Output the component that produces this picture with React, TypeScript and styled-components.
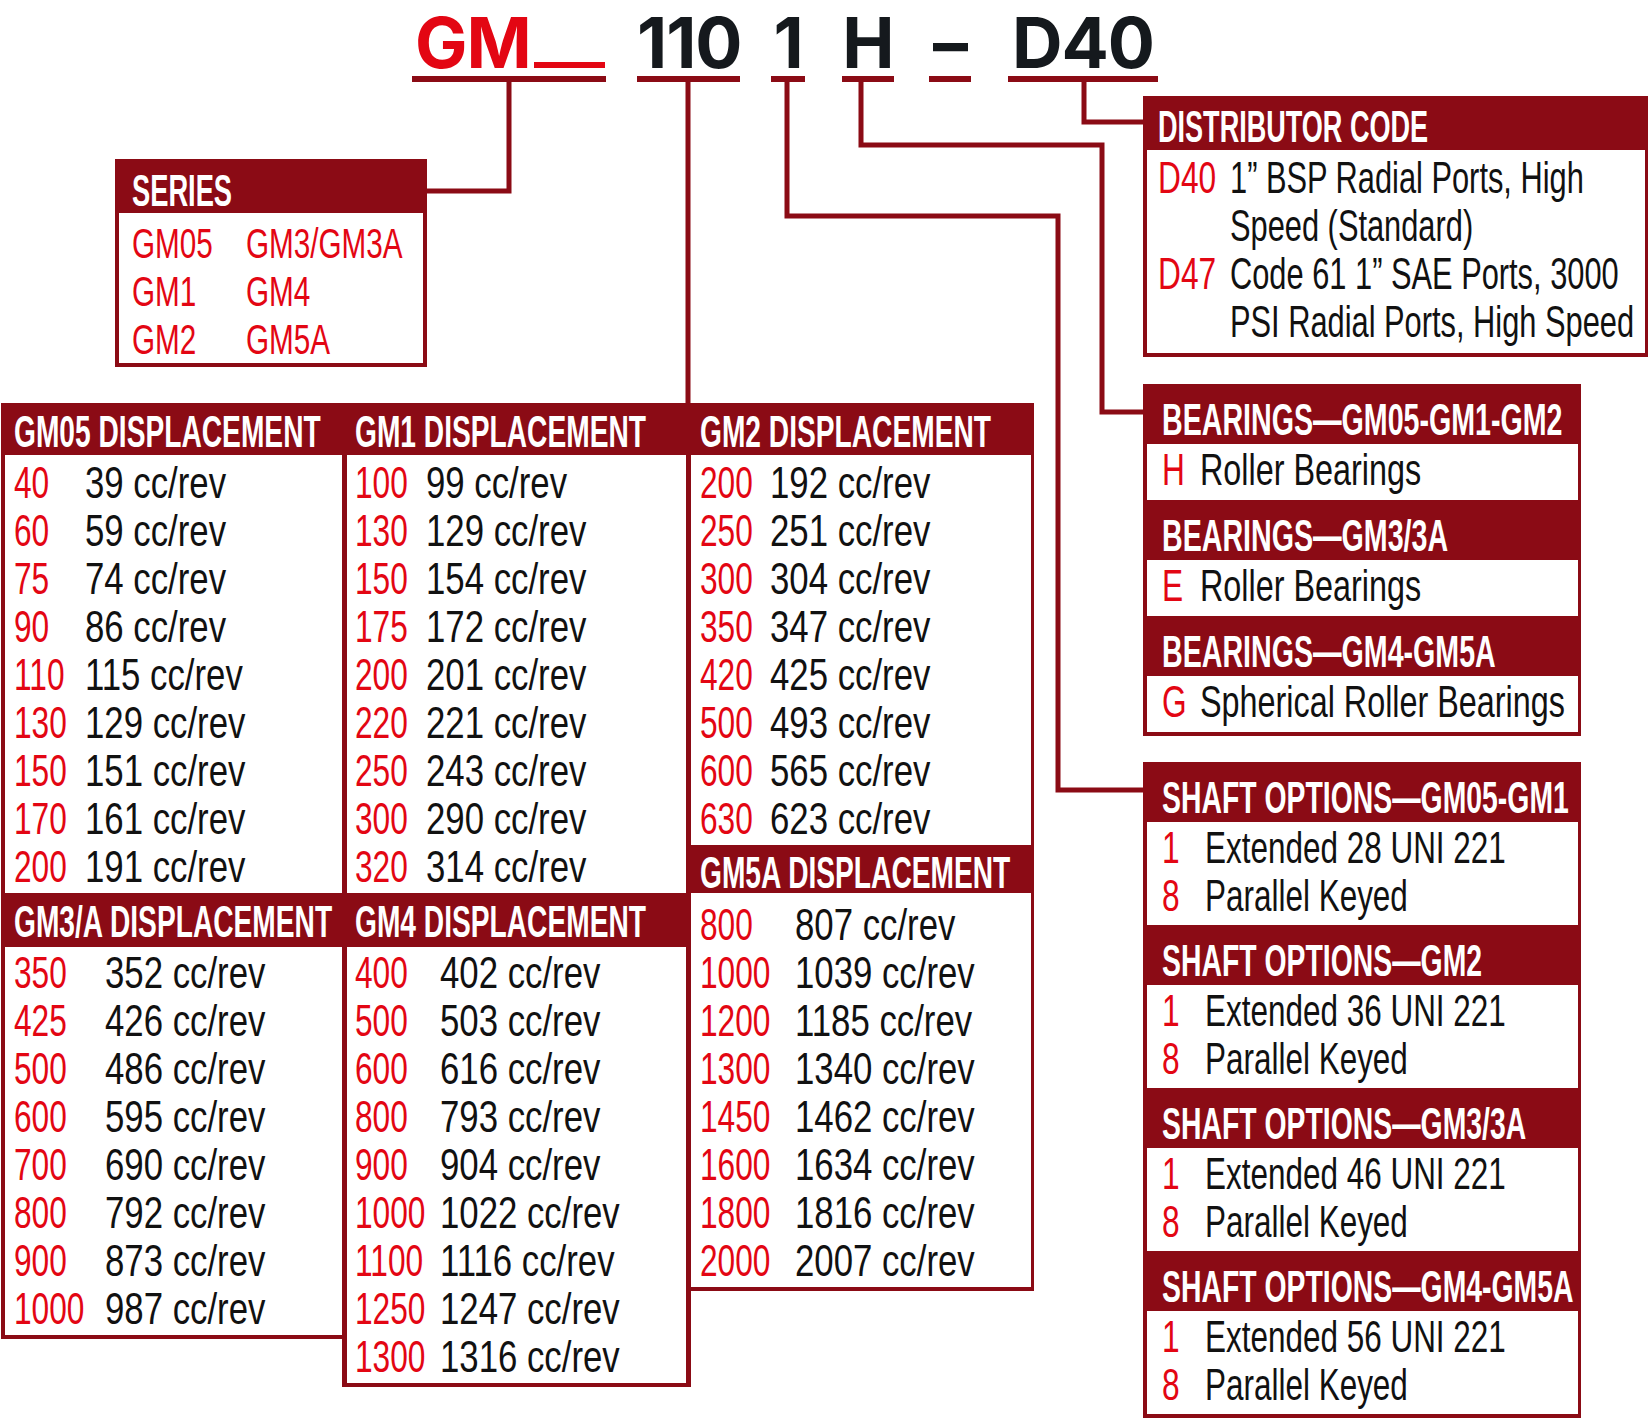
import React from 'react';
import styled, { createGlobalStyle } from 'styled-components';

const DARK = '#8b0b15';
const RED = '#e30613';
const INK = '#111111';
const COND = `"Liberation Sans Narrow", "Liberation Sans", Arial, sans-serif`;

const Global = createGlobalStyle`
  html, body { margin: 0; padding: 0; background: #fff; }
  body { font-family: ${COND}; }
  * { box-sizing: border-box; }
`;

const Page = styled.div`
  position: relative;
  width: 1650px;
  height: 1422px;
  overflow: hidden;
  background: #fff;
`;

/* ---------- title code ---------- */
const TitleRow = styled.div`
  display: flex;
  align-items: flex-start;
  height: 90px;
  padding: 9px 0 0 412px;
`;

const Token = styled.div<{ $w: number; $gap: number }>`
  width: ${(p) => p.$w}px;
  margin-left: ${(p) => p.$gap}px;
  display: flex;
  flex-direction: column;
`;

const TokenText = styled.div<{ $color: string; $left?: boolean }>`
  font-family: Inter, "Open Sans", sans-serif;
  font-weight: 700;
  font-size: 70px;
  line-height: 67px;
  height: 67px;
  letter-spacing: -1px;
  white-space: nowrap;
  color: ${(p) => p.$color};
  text-align: ${(p) => (p.$left ? 'left' : 'center')};
  padding-left: ${(p) => (p.$left ? 3 : 0)}px;
`;

const Underscore = styled.span`
  display: inline-block;
  width: 71px;
  height: 6px;
  margin-left: 3px;
  background: ${RED};
`;

const TokenBar = styled.div`
  height: 6px;
  background: ${DARK};
`;

/* ---------- layout ---------- */
const Main = styled.div`
  display: flex;
  align-items: flex-start;
`;

const LeftArea = styled.div`
  flex: none;
  width: 1143px;
  display: flex;
  flex-direction: column;
  align-items: flex-start;
`;

const RightArea = styled.div`
  display: flex;
  flex-direction: column;
  align-items: flex-start;
`;

/* ---------- shared boxes ---------- */
const Panel = styled.div<{ $w: number; $mt: number; $ml?: number; $pl: number; $pr: number }>`
  width: ${(p) => p.$w}px;
  margin-top: ${(p) => p.$mt}px;
  margin-left: ${(p) => p.$ml ?? 0}px;
  background: ${DARK};
  padding: 0 ${(p) => p.$pr}px 4px ${(p) => p.$pl}px;
  display: flex;
  flex-direction: column;
`;

const Header = styled.div<{ $h: number; $pt: number; $pl: number }>`
  height: ${(p) => p.$h}px;
  padding: ${(p) => p.$pt}px 0 0 ${(p) => p.$pl}px;
  background: ${DARK};
  line-height: 49px;
  overflow: visible;
`;

const HeadText = styled.span<{ $s?: number }>`
  display: inline-block;
  white-space: nowrap;
  font-family: ${COND};
  font-weight: 700;
  font-size: 44px;
  color: #fff;
  transform: scaleX(${(p) => p.$s ?? 0.62});
  transform-origin: 0 50%;
`;

const Body = styled.div<{ $pt: number; $pb: number; $pl: number }>`
  background: #fff;
  padding: ${(p) => p.$pt}px 0 ${(p) => p.$pb}px ${(p) => p.$pl}px;
`;

const Row = styled.div<{ $code: number }>`
  display: grid;
  grid-template-columns: ${(p) => p.$code}px auto;
  line-height: 48px;
  height: 48px;
  font-size: 44px;
`;

const MultiRow = styled.div<{ $code: number }>`
  display: grid;
  grid-template-columns: ${(p) => p.$code}px auto;
  line-height: 48px;
  font-size: 44px;
`;

const CodeText = styled.span<{ $s?: number }>`
  display: inline-block;
  white-space: nowrap;
  font-family: ${COND};
  color: ${RED};
  transform: scaleX(${(p) => p.$s ?? 0.72});
  transform-origin: 0 50%;
`;

const DescText = styled.span<{ $s?: number }>`
  display: inline-block;
  white-space: nowrap;
  font-family: ${COND};
  color: ${INK};
  transform: scaleX(${(p) => p.$s ?? 0.715});
  transform-origin: 0 50%;
`;

/* ---------- series ---------- */
const SeriesGrid = styled.div`
  display: grid;
  grid-template-columns: 114px auto;
  grid-auto-rows: 48px;
  line-height: 48px;
  font-size: 43px;
`;

/* ---------- tables ---------- */
const Tables = styled.div`
  margin: 36px 0 0 1px;
  display: flex;
  align-items: flex-start;
`;

const Column = styled.div<{ $w: number; $pl: number; $pr: number }>`
  width: ${(p) => p.$w}px;
  flex: none;
  background: ${DARK};
  padding: 0 ${(p) => p.$pr}px 4px ${(p) => p.$pl}px;
  display: flex;
  flex-direction: column;
`;

/* ---------- connectors ---------- */
const Connectors = styled.svg`
  position: absolute;
  left: 0;
  top: 0;
  pointer-events: none;
`;

type Block = {
  title: string;
  h: number;
  hpt: number;
  pt: number;
  pb: number;
  code: number;
  rows: [string, string][];
};

const r = (s: string): [string, string][] =>
  s.split(',').map((p) => {
    const [a, b] = p.trim().split(' ');
    return [a, `${b} cc/rev`];
  });

const columns: { w: number; pl: number; pr: number; bpl: number; blocks: Block[] }[] = [
  {
    w: 341,
    pl: 4,
    pr: 0,
    bpl: 9,
    blocks: [
      { title: 'GM05 DISPLACEMENT', h: 52, hpt: 4, pt: 4, pb: 2, code: 71, rows: r('40 39, 60 59, 75 74, 90 86, 110 115, 130 129, 150 151, 170 161, 200 191') },
      { title: 'GM3/A DISPLACEMENT', h: 54, hpt: 4, pt: 2, pb: 2, code: 91, rows: r('350 352, 425 426, 500 486, 600 595, 700 690, 800 792, 900 873, 1000 987') },
    ],
  },
  {
    w: 349,
    pl: 5,
    pr: 5,
    bpl: 8,
    blocks: [
      { title: 'GM1 DISPLACEMENT', h: 52, hpt: 4, pt: 4, pb: 2, code: 71, rows: r('100 99, 130 129, 150 154, 175 172, 200 201, 220 221, 250 243, 300 290, 320 314') },
      { title: 'GM4 DISPLACEMENT', h: 54, hpt: 4, pt: 2, pb: 2, code: 85, rows: r('400 402, 500 503, 600 616, 800 793, 900 904, 1000 1022, 1100 1116, 1250 1247, 1300 1316') },
    ],
  },
  {
    w: 343,
    pl: 0,
    pr: 3,
    bpl: 9,
    blocks: [
      { title: 'GM2 DISPLACEMENT', h: 52, hpt: 4, pt: 4, pb: 2, code: 70, rows: r('200 192, 250 251, 300 304, 350 347, 420 425, 500 493, 600 565, 630 623') },
      { title: 'GM5A DISPLACEMENT', h: 48, hpt: 3, pt: 8, pb: 2, code: 95, rows: r('800 807, 1000 1039, 1200 1185, 1300 1340, 1450 1462, 1600 1634, 1800 1816, 2000 2007') },
    ],
  },
];

const tokens = [
  { text: 'GM', w: 194, gap: 0, color: RED, left: true },
  { text: '110', w: 103, gap: 31, color: '#15191d' },
  { text: '1', w: 34, gap: 31, color: '#15191d' },
  { text: 'H', w: 52, gap: 37, color: '#15191d' },
  { text: '–', w: 42, gap: 35, color: '#15191d' },
  { text: 'D40', w: 150, gap: 37, color: '#15191d' },
];

const bearings: [string, string, string][] = [
  ['BEARINGS—GM05-GM1-GM2', 'H', 'Roller Bearings'],
  ['BEARINGS—GM3/3A', 'E', 'Roller Bearings'],
  ['BEARINGS—GM4-GM5A', 'G', 'Spherical Roller Bearings'],
];

const shafts: [string, string][] = [
  ['SHAFT OPTIONS—GM05-GM1', '28'],
  ['SHAFT OPTIONS—GM2', '36'],
  ['SHAFT OPTIONS—GM3/3A', '46'],
  ['SHAFT OPTIONS—GM4-GM5A', '56'],
];

export default function App() {
  return (
    <Page>
      <Global />
      <TitleRow>
        {tokens.map((t, i) => (
          <Token key={i} $w={t.w} $gap={t.gap}>
            <TokenText $color={t.color} $left={t.left}>
              {t.text}
              {t.left && <Underscore />}
            </TokenText>
            <TokenBar />
          </Token>
        ))}
      </TitleRow>

      <Main>
        <LeftArea>
          <Panel $w={312} $mt={69} $ml={115} $pl={4} $pr={4}>
            <Header $h={54} $pt={7} $pl={13}>
              <HeadText>SERIES</HeadText>
            </Header>
            <Body $pt={6} $pb={0} $pl={13}>
              <SeriesGrid>
                {['GM05', 'GM3/GM3A', 'GM1', 'GM4', 'GM2', 'GM5A'].map((s) => (
                  <div key={s}>
                    <CodeText $s={0.69}>{s}</CodeText>
                  </div>
                ))}
              </SeriesGrid>
            </Body>
          </Panel>

          <Tables>
            {columns.map((c, ci) => (
              <Column key={ci} $w={c.w} $pl={c.pl} $pr={c.pr}>
                {c.blocks.map((b) => (
                  <React.Fragment key={b.title}>
                    <Header $h={b.h} $pt={b.hpt} $pl={c.bpl}>
                      <HeadText $s={0.64}>{b.title}</HeadText>
                    </Header>
                    <Body $pt={b.pt} $pb={b.pb} $pl={c.bpl}>
                      {b.rows.map(([a, v]) => (
                        <Row key={a} $code={b.code}>
                          <div>
                            <CodeText>{a}</CodeText>
                          </div>
                          <div>
                            <DescText $s={0.79}>{v}</DescText>
                          </div>
                        </Row>
                      ))}
                    </Body>
                  </React.Fragment>
                ))}
              </Column>
            ))}
          </Tables>
        </LeftArea>

        <RightArea>
          <Panel $w={505} $mt={6} $pl={4} $pr={3}>
            <Header $h={54} $pt={6} $pl={11}>
              <HeadText $s={0.615}>DISTRIBUTOR CODE</HeadText>
            </Header>
            <Body $pt={4} $pb={7} $pl={11}>
              <MultiRow $code={72}>
                <div>
                  <CodeText>D40</CodeText>
                </div>
                <div>
                  <DescText $s={0.7}>1” BSP Radial Ports, High</DescText>
                  <br />
                  <DescText $s={0.7}>Speed (Standard)</DescText>
                </div>
              </MultiRow>
              <MultiRow $code={72}>
                <div>
                  <CodeText>D47</CodeText>
                </div>
                <div>
                  <DescText $s={0.7}>Code 61 1” SAE Ports, 3000</DescText>
                  <br />
                  <DescText $s={0.7}>PSI Radial Ports, High Speed</DescText>
                </div>
              </MultiRow>
            </Body>
          </Panel>

          <Panel $w={438} $mt={27} $pl={4} $pr={3}>
            {bearings.map(([t, c, d]) => (
              <React.Fragment key={t}>
                <Header $h={60} $pt={11} $pl={15}>
                  <HeadText $s={0.65}>{t}</HeadText>
                </Header>
                <Body $pt={2} $pb={6} $pl={15}>
                  <Row $code={38}>
                    <div>
                      <CodeText>{c}</CodeText>
                    </div>
                    <div>
                      <DescText $s={0.735}>{d}</DescText>
                    </div>
                  </Row>
                </Body>
              </React.Fragment>
            ))}
          </Panel>

          <Panel $w={438} $mt={26} $pl={4} $pr={3}>
            {shafts.map(([t, n]) => (
              <React.Fragment key={t}>
                <Header $h={60} $pt={11} $pl={15}>
                  <HeadText $s={0.645}>{t}</HeadText>
                </Header>
                <Body $pt={2} $pb={5} $pl={15}>
                  <Row $code={43}>
                    <div>
                      <CodeText>1</CodeText>
                    </div>
                    <div>
                      <DescText>Extended {n} UNI 221</DescText>
                    </div>
                  </Row>
                  <Row $code={43}>
                    <div>
                      <CodeText>8</CodeText>
                    </div>
                    <div>
                      <DescText>Parallel Keyed</DescText>
                    </div>
                  </Row>
                </Body>
              </React.Fragment>
            ))}
          </Panel>
        </RightArea>
      </Main>

      <Connectors width={1650} height={1422} viewBox="0 0 1650 1422">
        <g fill="none" stroke={DARK} strokeWidth={5} strokeLinejoin="miter" strokeLinecap="butt">
          <path d="M509 81 V191 H427" />
          <path d="M688 81 V403" />
          <path d="M787 81 V216 H1058 V790 H1143" />
          <path d="M861 81 V145 H1102 V412 H1143" />
          <path d="M1084 81 V122 H1143" />
        </g>
      </Connectors>
    </Page>
  );
}
